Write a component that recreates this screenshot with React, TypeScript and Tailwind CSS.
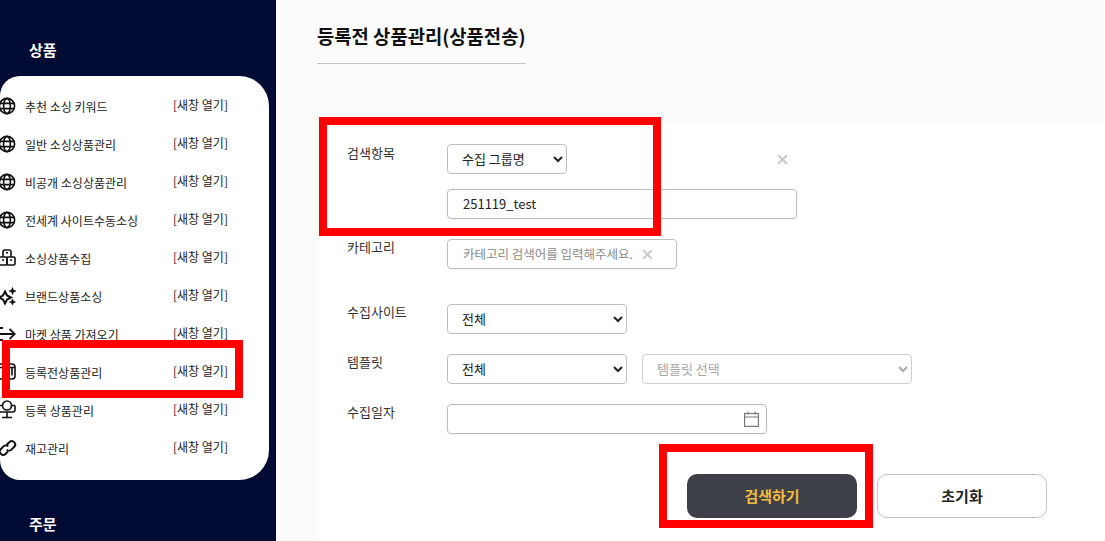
import React from "react";
import { X } from "lucide-react";

const FONT = "font-['Noto_Sans_CJK_KR','Noto_Sans',sans-serif]";
const ICON = "overflow-visible shrink-0";

const Globe = () => (
  <svg className={ICON} width="18" height="18" viewBox="0 0 18 18" fill="none" stroke="#111" strokeWidth="1.6">
    <circle cx="7" cy="9" r="7.6" />
    <ellipse cx="7" cy="9" rx="3.4" ry="7.6" />
    <path d="M-.5 6.400h15M-.5 11.600h15" />
  </svg>
);
const Boxes = () => (
  <svg className={ICON} width="18" height="18" viewBox="0 0 18 18" fill="none" stroke="#111" strokeWidth="1.6">
    <path d="M3 8V2.800A1.800 1.800 0 0 1 4.800 1h4.400A1.800 1.800 0 0 1 11 2.800V8" />
    <rect x="-1" y="8" width="8" height="8" rx="1.200" />
    <rect x="7" y="8" width="8" height="8" rx="1.200" />
    <path d="M6 3.800h2M2 11h2M10 11h2" />
  </svg>
);
const Sparkle = () => (
  <svg className={ICON} width="18" height="18" viewBox="0 0 18 18" fill="#111" stroke="#111" strokeWidth="0.6">
    <path d="M5 4.500 7 8.500 11 10.500 7 12.500 5 16.500 3 12.500-1 10.500 3 8.500z" fill="none" strokeWidth="2" />
    <path d="M12.500.5l1 2.500 2.500 1-2.500 1-1 2.500-1-2.500-2.500-1 2.500-1zM12.500 12l.9 2.100 2.100.9-2.100.9-.9 2.100-.9-2.100-2.100-.9 2.100-.9z" />
  </svg>
);
const Arrow = () => (
  <svg className={ICON} width="18" height="18" viewBox="0 0 18 18" fill="none" stroke="#111" strokeWidth="1.8">
    <path d="M-1 3h4M-1 9h15M9.500 3.800 14.700 9l-5.200 5.200M-1 15h4" />
  </svg>
);
const Drawer = () => (
  <svg className={ICON} width="18" height="18" viewBox="0 0 18 18" fill="none" stroke="#111" strokeWidth="1.6">
    <rect x="-2" y="1" width="17" height="15" rx="3" />
    <path d="M-2 4.500h17M12 4.500v8" />
  </svg>
);
const Monitor = () => (
  <svg className={ICON} width="18" height="18" viewBox="0 0 18 18" fill="none" stroke="#111" strokeWidth="1.6">
    <path d="M-1 4.500h3.500a4.500 4.500 0 0 0 9 0H15M2.500 4.500A4.500 4.500 0 0 1 7 0a4.500 4.500 0 0 1 4.500 4.500" />
    <path d="M-1 4.500V9a2 2 0 0 0 2 2h12a2 2 0 0 0 2-2V4.500M7 11v5M2 16.500h10" />
  </svg>
);
const Link = () => (
  <svg className={ICON} width="18" height="18" viewBox="0 0 18 18" fill="none" stroke="#111" strokeWidth="2">
    <path d="M6.500 6l3-3a3.400 3.400 0 0 1 4.800 4.800l-2.800 2.800a3.400 3.400 0 0 1-4.800 0" />
    <path d="M8 12.500l-2.500 2.500a3.400 3.400 0 0 1-4.800-4.800l2.800-2.800a3.400 3.400 0 0 1 4.800 0" />
  </svg>
);

const MENU: [React.ReactNode, string][] = [
  [<Globe />, "추천 소싱 키워드"],
  [<Globe />, "일반 소싱상품관리"],
  [<Globe />, "비공개 소싱상품관리"],
  [<Globe />, "전세계 사이트수동소싱"],
  [<Boxes />, "소싱상품수집"],
  [<Sparkle />, "브랜드상품소싱"],
  [<Arrow />, "마켓 상품 가져오기"],
  [<Drawer />, "등록전상품관리"],
  [<Monitor />, "등록 상품관리"],
  [<Link />, "재고관리"],
];

const Select = ({ label, className, disabled }: { label: string; className: string; disabled?: boolean }) => (
  <select
    disabled={disabled}
    defaultValue={label}
    className={`h-[30px] rounded-[4px] border bg-white pb-[2px] pl-[10px] text-[13px] ${FONT} ${
      disabled ? "border-[#cfcfcf] text-[#a8a8a8]" : "border-[#bdbdbd] text-[#222]"
    } ${className}`}
  >
    <option>{label}</option>
  </select>
);

const Row = ({ label, className, labelClass, children }: { label: string; className: string; labelClass: string; children: React.ReactNode }) => (
  <div className={`flex ${className}`}>
    <div className={`w-[130px] shrink-0 pl-[30px] text-[13px] text-[#333] ${labelClass}`}>{label}</div>
    <div className="flex gap-[15px]">{children}</div>
  </div>
);

const BOX = "flex h-[30px] items-center rounded-[4px] border border-[#bdbdbd] shadow-[0_1px_2px_rgba(0,0,0,0.05)]";

export default function App() {
  return (
    <div className={`relative flex h-[541px] w-[1105px] overflow-hidden bg-[#fbfbfb] ${FONT}`}>
      <aside className="flex h-full w-[276px] shrink-0 flex-col bg-[#020b33] pt-[40px]">
        <div className="pl-[29px] text-[15px] font-bold leading-[20px] text-white">상품</div>
        <div className="mt-[16px] h-[404px] w-[269px] rounded-r-[30px] rounded-l-[20px] bg-white pt-[11px]">
          {MENU.map(([icon, name]) => (
            <div key={name} className="flex h-[38px] items-center">
              <div className="flex w-[25px] shrink-0">{icon}</div>
              <div className="w-[148px] shrink-0 pt-[2px] text-[12px] text-[#222]">{name}</div>
              <div className="-mt-[3px] text-[12px] text-[#222]">[새창 열기]</div>
            </div>
          ))}
        </div>
        <div className="mt-[34px] pl-[29px] text-[15px] font-bold leading-[20px] text-white">주문</div>
      </aside>

      <main className="flex min-w-0 flex-1 flex-col pl-[41px]">
        <div className="mt-[23px] w-[209px] border-b border-[#c4c4c4] pb-[14px] text-[18.800px] font-bold leading-[26px] text-[#111] whitespace-nowrap">
          등록전 상품관리(상품전송)
        </div>
        <section className="mt-[60px] flex-1 bg-white pt-[20px]">
          <Row label="검색항목" labelClass="leading-[18px]" className="mb-[20px]">
            <div className="flex flex-col gap-[15px]">
              <div className="flex items-center">
                <Select label="수집 그룹명" className="w-[120px]" />
                <X size={15} strokeWidth={3} className="ml-[208px] text-[#c8c8c8]" />
              </div>
              <div className={`${BOX} w-[350px] pl-[15px] text-[13px] text-[#222]`}>251119_test</div>
            </div>
          </Row>
          <Row label="카테고리" labelClass="leading-[16px]" className="mb-[35px]">
            <div className={`${BOX} w-[230px] pl-[15px] text-[12.500px] text-[#8a8a8a]`}>
              <span>카테고리 검색어를 입력해주세요.</span>
              <X size={15} strokeWidth={3} className="ml-[7px] text-[#c8c8c8]" />
            </div>
          </Row>
          <Row label="수집사이트" labelClass="leading-[16px]" className="mb-[20px]">
            <Select label="전체" className="w-[180px]" />
          </Row>
          <Row label="템플릿" labelClass="leading-[16px]" className="mb-[20px]">
            <Select label="전체" className="w-[180px]" />
            <Select label="템플릿 선택" className="w-[270px]" disabled />
          </Row>
          <Row label="수집일자" labelClass="leading-[16px]" className="">
            <div className={`${BOX} w-[320px] justify-end pr-[7px]`}>
              <svg width="15" height="16" viewBox="0 0 15 16" fill="none" stroke="#777" strokeWidth="1.200">
                <rect x="0.600" y="2.500" width="13.800" height="12.900" />
                <path d="M0.600 6h13.800M4 .5v3M11 .5v3" />
              </svg>
            </div>
          </Row>
          <div className="mt-[40px] flex gap-[20px] pl-[370px]">
            <button className="h-[44px] w-[170px] rounded-[10px] bg-[#3d4047] text-[15px] font-bold text-[#f4bb3c]">검색하기</button>
            <button className="h-[44px] w-[170px] rounded-[10px] border border-[#c4c4c4] bg-white text-[15px] font-bold text-[#222]">초기화</button>
          </div>
        </section>
      </main>

      <div className="pointer-events-none absolute left-[319px] top-[117px] h-[119px] w-[342px] border-[8px] border-[#ff0000]" />
      <div className="pointer-events-none absolute left-[2px] top-[340px] h-[58px] w-[241px] border-[8px] border-[#ff0000]" />
      <div className="pointer-events-none absolute left-[659px] top-[444px] h-[84px] w-[214px] border-[8px] border-[#ff0000]" />
    </div>
  );
}
